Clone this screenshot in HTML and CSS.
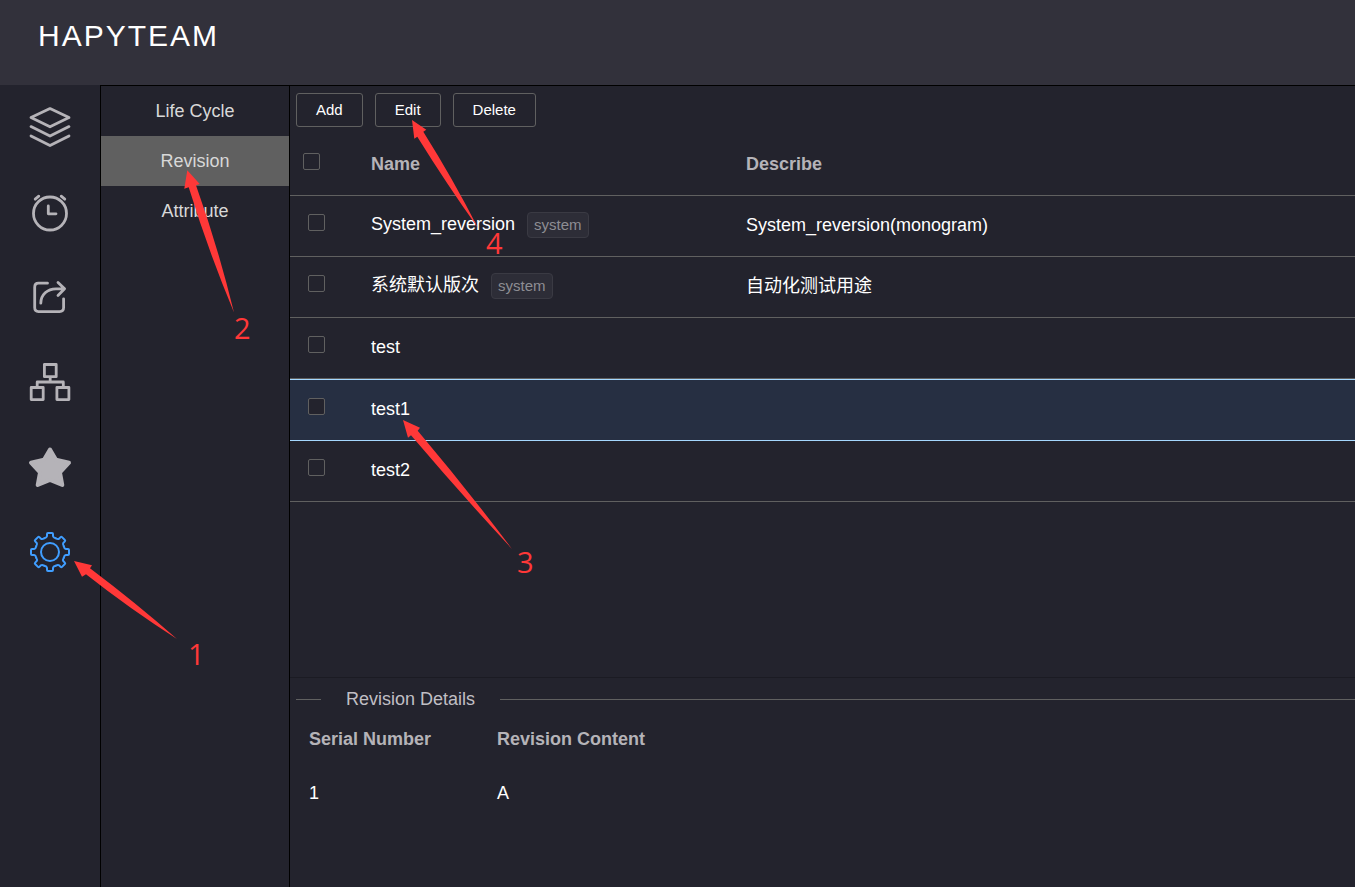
FILE: index.html
```
<!DOCTYPE html>
<html lang="en">
<head>
<meta charset="utf-8">
<title>HAPYTEAM</title>
<link rel="stylesheet" href="styles.css">
</head>
<body>
<div class="app">
  <header class="topbar"><h1 class="brand">HAPYTEAM</h1></header>
  <div class="body">
    <nav class="rail" aria-label="Modules">
      <button class="rail-item" type="button" aria-label="Layers">
        <svg class="icon" viewBox="0 0 44 44"><path d="M22 2.6 41 11.6 22 20.8 3 11.6ZM3 20.6 22 30.1 41 20.6M3 30 22 39.5 41 30"/></svg>
      </button>
      <button class="rail-item" type="button" aria-label="Schedule">
        <svg class="icon" viewBox="0 0 44 44"><circle cx="22" cy="22.5" r="16.5"/><path d="M7.2 8.2 10.8 5.2M33.2 5.2 36.8 8.2M20.3 15V22.8H28"/></svg>
      </button>
      <button class="rail-item" type="button" aria-label="Share">
        <svg class="icon" viewBox="0 0 44 44"><path d="M19.5 7.2H10.5Q6.7 7.2 6.7 11.2V31.6Q6.7 35.6 10.5 35.6H31.6Q35.6 35.6 35.6 31.6V22.8M12.8 27.2C12.8 18.5 19.5 12.8 28 12.8H36.5M30 6.4 36.6 12.8 30 19.4"/></svg>
      </button>
      <button class="rail-item" type="button" aria-label="Structure">
        <svg class="icon" viewBox="0 0 44 44"><path d="M16.4 3.5H28.2V15.7H16.4ZM3.2 26.5H15.2V38.6H3.2ZM28.9 26.5H40.9V38.6H28.9ZM22.2 16V21M9.2 26V21H35.3V26"/></svg>
      </button>
      <button class="rail-item" type="button" aria-label="Favourites">
        <svg class="icon icon-solid" viewBox="0 0 44 44"><path d="M22 3.5 28 13.8 41 16.7 32 26.5 34.3 39 22 33.8 9.7 39 12 26.5 3 16.7 16 13.8Z"/></svg>
      </button>
      <button class="rail-item rail-item-active" type="button" aria-label="Settings">
        <svg class="icon icon-gear" viewBox="0 0 44 44">
          <defs><path id="tooth" d="M-5.7-13.8Q-3.2-14.3-3-15.8V-18Q-3-19-2-19H2Q3-19 3-18V-15.8Q3.2-14.3 5.7-13.8"/></defs>
          <g transform="translate(22 21)">
            <circle r="9"/>
            <use href="#tooth"/><use href="#tooth" transform="rotate(45)"/><use href="#tooth" transform="rotate(90)"/><use href="#tooth" transform="rotate(135)"/><use href="#tooth" transform="rotate(180)"/><use href="#tooth" transform="rotate(225)"/><use href="#tooth" transform="rotate(270)"/><use href="#tooth" transform="rotate(315)"/>
          </g>
        </svg>
      </button>
    </nav>
    <nav class="menu" aria-label="Settings">
      <a class="menu-item" href="#life-cycle">Life Cycle</a>
      <a class="menu-item menu-item-active" href="#revision">Revision</a>
      <a class="menu-item" href="#attribute">Attribute</a>
    </nav>
    <main class="content">
      <section class="list">
        <div class="toolbar">
          <button class="btn" type="button">Add</button>
          <button class="btn" type="button">Edit</button>
          <button class="btn" type="button">Delete</button>
        </div>
        <table class="grid">
          <colgroup><col class="col-check"><col class="col-name"><col></colgroup>
          <thead>
            <tr><th class="check"><input type="checkbox" aria-label="Select all"></th><th>Name</th><th>Describe</th></tr>
          </thead>
          <tbody>
            <tr><td class="check"><input type="checkbox" aria-label="Select System_reversion"></td><td>System_reversion<span class="tag">system</span></td><td>System_reversion(monogram)</td></tr>
            <tr><td class="check"><input type="checkbox" aria-label="Select 系统默认版次"></td><td>系统默认版次<span class="tag">system</span></td><td>自动化测试用途</td></tr>
            <tr><td class="check"><input type="checkbox" aria-label="Select test"></td><td>test</td><td></td></tr>
            <tr class="selected"><td class="check"><input type="checkbox" aria-label="Select test1"></td><td>test1</td><td></td></tr>
            <tr><td class="check"><input type="checkbox" aria-label="Select test2"></td><td>test2</td><td></td></tr>
          </tbody>
        </table>
      </section>
      <section class="details">
        <h2 class="divider">Revision Details</h2>
        <table class="grid-details">
          <colgroup><col class="col-serial"><col></colgroup>
          <thead><tr><th>Serial Number</th><th>Revision Content</th></tr></thead>
          <tbody><tr><td>1</td><td>A</td></tr></tbody>
        </table>
      </section>
    </main>
  </div>
  <svg class="steps" width="600" height="700" viewBox="0 0 600 700">
    <path d="M74 561 92 565.3 90 568.3 Q136 603 177 639 Q130 609 86 574.3 L82 576.7Z"/>
    <path d="M187.3 170.3 199.7 184 196 185.3 Q218 247 234 312.5 Q208 250 188.7 187.3 L184.3 188.7Z"/>
    <path d="M403 420 420 427.7 417.7 430.7 Q467 489 512 549 Q460 493 411 435.3 L408 437.7Z"/>
    <path d="M412 120 426.3 129.7 423.3 131.7 Q453 179 478 228 Q446 183 417.3 136.7 L414.3 138.7Z"/>
    <text x="188" y="665">1</text>
    <text x="234" y="339">2</text>
    <text x="517" y="573">3</text>
    <text x="486" y="254">4</text>
  </svg>
</div>
</body>
</html>
```
FILE: styles.css
```
* { box-sizing: border-box; }

body {
  margin: 0;
  background: #23232d;
  color: #fff;
  font-family: "Liberation Sans", Arial, "Noto Sans CJK SC", sans-serif;
  font-size: 18px;
  line-height: 24px;
}

.app {
  position: relative;
  display: flex;
  flex-direction: column;
  min-height: 100vh;
}

.topbar {
  height: 85px;
  padding: 16px 38px;
  background: #32313b;
}

.brand {
  margin: 0;
  font-size: 30px;
  font-weight: 400;
  line-height: 40px;
  letter-spacing: 2px;
}

.body { display: flex; flex: 1; }

.rail {
  display: flex;
  flex-direction: column;
  flex: 0 0 100px;
}

.rail-item {
  display: flex;
  justify-content: center;
  height: 85px;
  padding: 21px 0 20px;
  border: 0;
  background: none;
  color: #b5b3b8;
}

.rail-item-active { color: #409eff; }

.icon {
  width: 44px;
  height: 44px;
  fill: none;
  stroke: currentColor;
  stroke-width: 2.8;
  stroke-linecap: round;
  stroke-linejoin: round;
}

.icon-solid { fill: currentColor; stroke-width: 4; }
.icon-gear { stroke-width: 2; }

.menu {
  flex: 0 0 190px;
  border: 1px solid #000;
  border-bottom: 0;
}

.menu-item {
  display: block;
  padding: 13px 0;
  color: #d8d8d8;
  text-align: center;
  text-decoration: none;
}

.menu-item-active { background: #606060; }

.content {
  display: flex;
  flex: 1;
  flex-direction: column;
  min-width: 0;
  border-top: 1px solid #000;
}

.list { flex: 1; }

.toolbar {
  display: flex;
  gap: 12px;
  padding: 7px 6px 8px;
}

.btn {
  height: 34px;
  padding: 0 19px 2px;
  border: 1px solid #606060;
  border-radius: 3px;
  background: none;
  color: #fff;
  font: 15px "Liberation Sans", Arial, sans-serif;
}

.grid, .grid-details {
  width: 100%;
  border-spacing: 0;
  table-layout: fixed;
  text-align: left;
}

.col-check { width: 62px; }
.col-name { width: 375px; }
.col-serial { width: 188px; }

.grid th, .grid td {
  height: 61px;
  padding: 0 19px 2px;
  border-bottom: 1px solid #606060;
}

th { color: #b5b3b8; }

.grid .check {
  padding: 0 0 8px 18px;
  line-height: 0;
}

.grid th.check { padding-left: 13px; }

input[type="checkbox"] {
  appearance: none;
  width: 17px;
  height: 17px;
  margin: 0;
  border: 1px solid #606060;
  border-radius: 2px;
  background: #23232d;
}

.grid .selected td {
  height: 62px;
  border-top: 1px solid #a5d8ff;
  border-bottom-color: #a5d8ff;
  background: #262f42;
}

.tag {
  display: inline-block;
  margin-left: 12px;
  padding: 0 6px;
  border: 1px solid #3a3a43;
  border-radius: 4px;
  background: #2d2d37;
  color: #8d8d93;
  font-size: 15px;
  vertical-align: middle;
}

.details {
  min-height: 210px;
  border-top: 1px solid #1b1b23;
}

.divider {
  display: flex;
  align-items: center;
  gap: 25px;
  margin: 9px 0 1px 6px;
  color: #c0bfc4;
  font-size: 18px;
  font-weight: 400;
}

.divider::before, .divider::after {
  height: 1px;
  background: #606060;
  content: "";
}

.divider::before { width: 25px; }
.divider::after { flex: 1; }

.grid-details th, .grid-details td {
  height: 54px;
  padding: 0 19px;
}

.steps {
  position: absolute;
  top: 0;
  left: 0;
  fill: #ff3838;
  font-family: "Open Sans", "Noto Sans", sans-serif;
  font-size: 29px;
  pointer-events: none;
}
```
